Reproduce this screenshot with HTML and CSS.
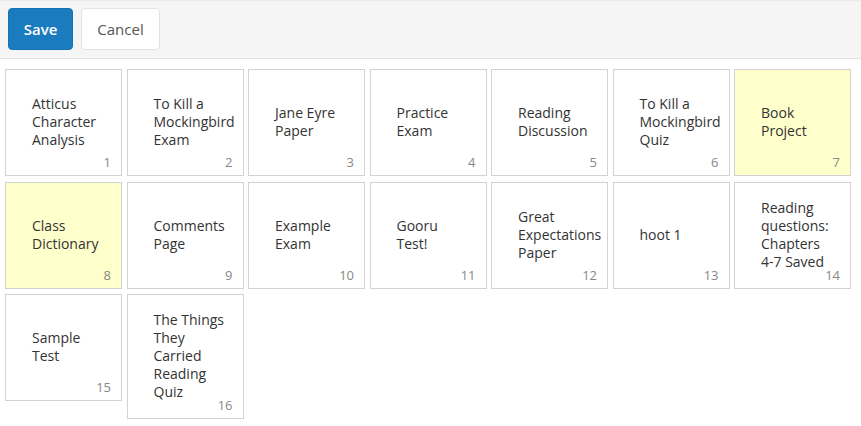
FILE: index.html
```html
<!DOCTYPE html>
<html>
<head>
<meta charset="utf-8">
<link rel="stylesheet" href="styles.css">
</head>
<body>
<div class="toolbar">
  <button class="btn btn-save">Save</button>
  <button class="btn btn-cancel">Cancel</button>
</div>
<div class="grid">
  <div class="tile"><span class="title">Atticus Character Analysis</span><span class="num">1</span></div>
  <div class="tile"><span class="title">To Kill a Mockingbird Exam</span><span class="num">2</span></div>
  <div class="tile"><span class="title">Jane Eyre Paper</span><span class="num">3</span></div>
  <div class="tile"><span class="title">Practice Exam</span><span class="num">4</span></div>
  <div class="tile"><span class="title">Reading Discussion</span><span class="num">5</span></div>
  <div class="tile"><span class="title">To Kill a Mockingbird Quiz</span><span class="num">6</span></div>
  <div class="tile tile-hl"><span class="title">Book Project</span><span class="num">7</span></div>
  <div class="tile tile-hl"><span class="title">Class Dictionary</span><span class="num">8</span></div>
  <div class="tile"><span class="title">Comments Page</span><span class="num">9</span></div>
  <div class="tile"><span class="title">Example Exam</span><span class="num">10</span></div>
  <div class="tile"><span class="title">Gooru Test!</span><span class="num">11</span></div>
  <div class="tile"><span class="title">Great Expectations Paper</span><span class="num">12</span></div>
  <div class="tile"><span class="title">hoot 1</span><span class="num">13</span></div>
  <div class="tile"><span class="title">Reading questions: Chapters 4-7 Saved</span><span class="num">14</span></div>
  <div class="tile"><span class="title">Sample Test</span><span class="num">15</span></div>
  <div class="tile"><span class="title">The Things They Carried Reading Quiz</span><span class="num">16</span></div>
</div>
</body>
</html>
```
FILE: styles.css
```css
* { box-sizing: border-box; }
html, body { margin: 0; padding: 0; background: #fff; }
body { font-family: "Open Sans", "Noto Sans", sans-serif; color: #333; }

.toolbar {
  height: 59px;
  background: #f5f5f5;
  border-top: 1px solid #ebebeb;
  border-bottom: 1px solid #e2e2e2;
  padding: 7px 8px 0;
  display: flex;
  gap: 8px;
  align-items: flex-start;
}
.btn {
  height: 42px;
  border-radius: 4px;
  font-family: "Open Sans", "Noto Sans", sans-serif;
  font-size: 15px;
  padding: 0;
  cursor: pointer;
}
.btn-save {
  width: 65px;
  background: #1a7bbf;
  border: 1px solid #1673b3;
  color: #fff;
  font-weight: 600;
}
.btn-cancel {
  width: 79px;
  background: #fff;
  border: 1px solid #e2e2e2;
  color: #555;
}

.grid {
  display: flex;
  flex-wrap: wrap;
  align-items: flex-start;
  column-gap: 4.5px;
  row-gap: 5.5px;
  padding: 10px 5px 0;
}
.tile {
  position: relative;
  width: 117px;
  min-height: 107px;
  border: 1px solid #d2d2d2;
  background: #fff;
  padding: 16px 16px 17px 26px;
  display: flex;
  align-items: center;
}
.tile-hl { background: #ffffcc; }
.title {
  font-size: 14px;
  line-height: 18px;
  color: #333;
}
.num {
  position: absolute;
  right: 10px;
  bottom: 4px;
  font-size: 13px;
  line-height: 18px;
  color: #888;
}
```
